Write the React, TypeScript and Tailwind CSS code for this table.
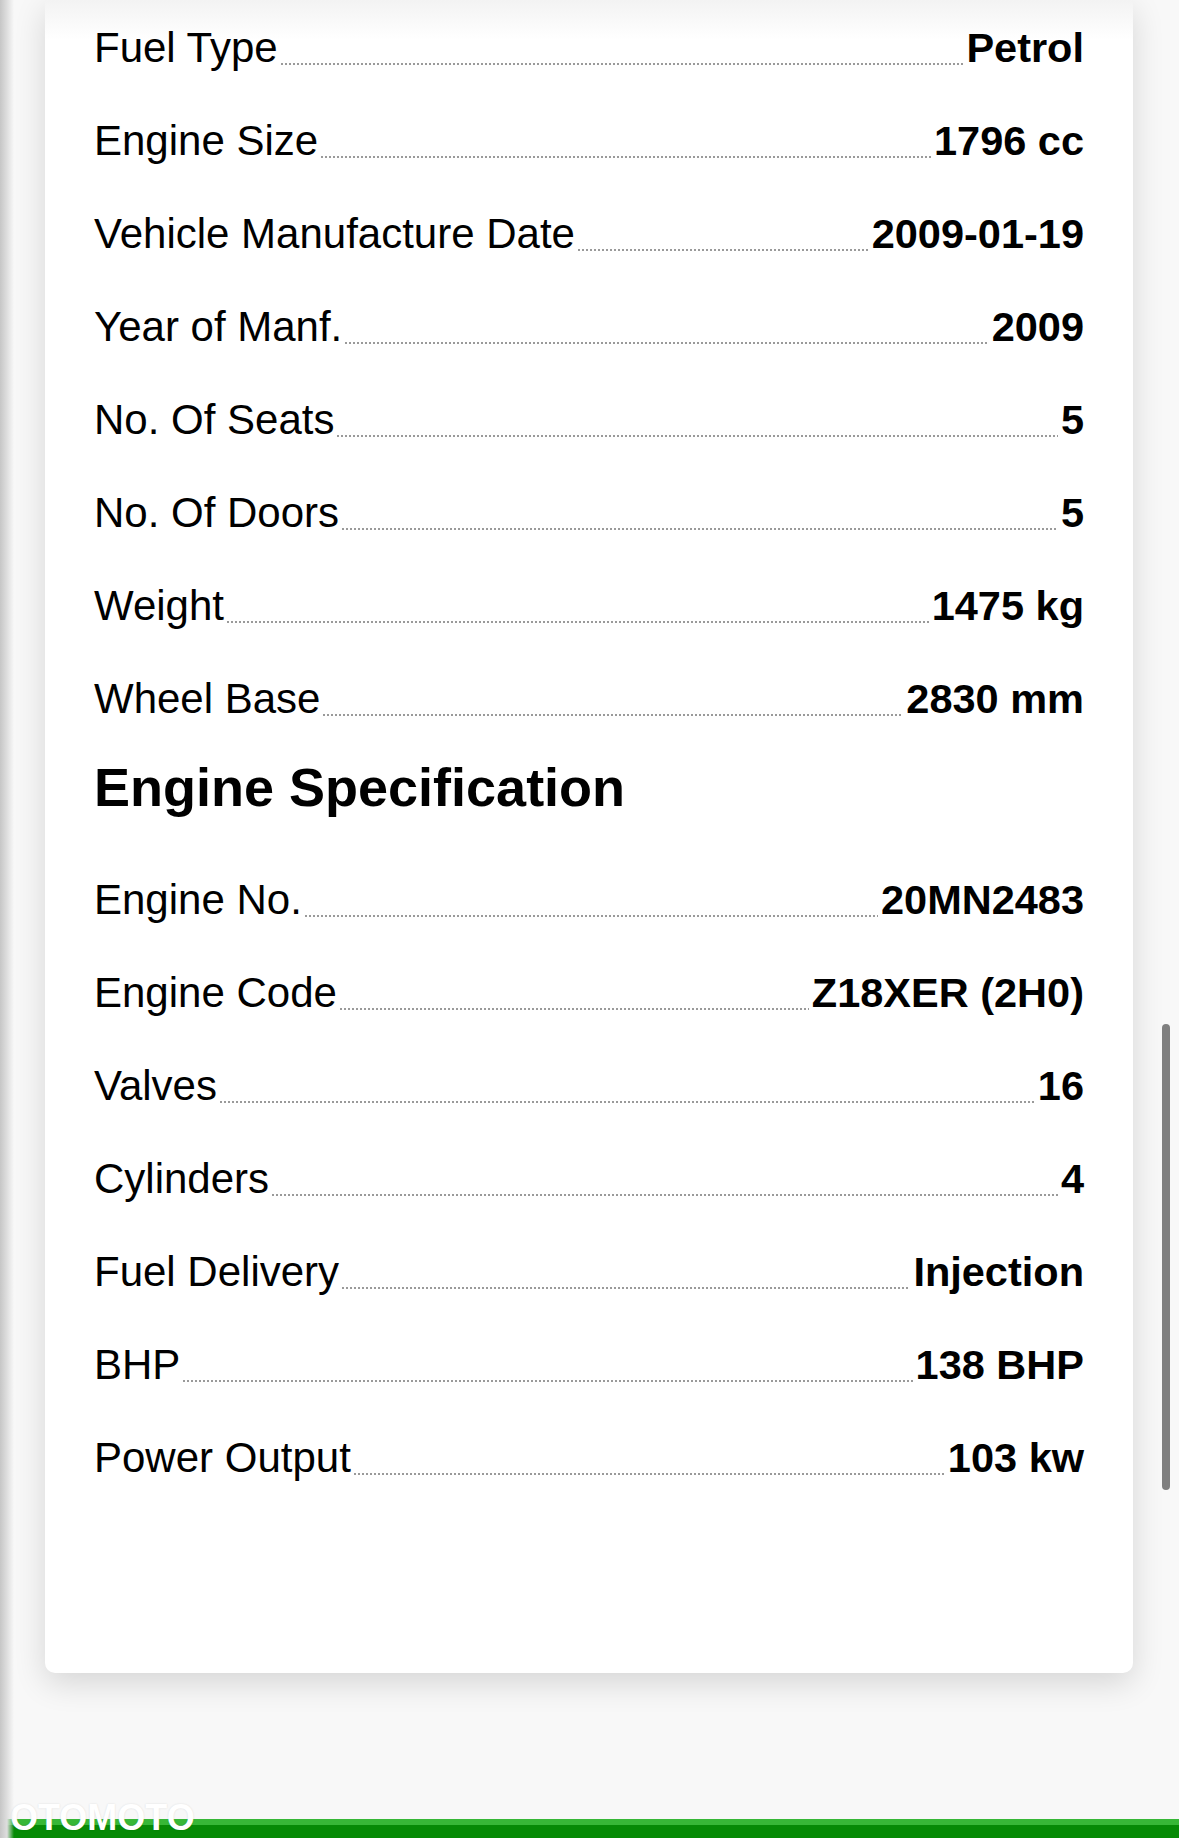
import React from "react";

const general: [string, string][] = [
  ["Fuel Type", "Petrol"],
  ["Engine Size", "1796 cc"],
  ["Vehicle Manufacture Date", "2009-01-19"],
  ["Year of Manf.", "2009"],
  ["No. Of Seats", "5"],
  ["No. Of Doors", "5"],
  ["Weight", "1475 kg"],
  ["Wheel Base", "2830 mm"],
];

const engine: [string, string][] = [
  ["Engine No.", "20MN2483"],
  ["Engine Code", "Z18XER (2H0)"],
  ["Valves", "16"],
  ["Cylinders", "4"],
  ["Fuel Delivery", "Injection"],
  ["BHP", "138 BHP"],
  ["Power Output", "103 kw"],
];

function Row({ label, value }: { label: string; value: string }) {
  return (
    <div className="flex items-baseline h-[93px] leading-[93px] text-black">
      <span className="whitespace-nowrap text-[42px]">{label}</span>
      <div className="flex-1 min-w-0 mx-[3px] h-[2px] bg-[linear-gradient(to_right,#9a9a9a_50%,transparent_50%)] bg-[length:4px_2px] bg-repeat-x translate-y-[3px]" />
      <span className="whitespace-nowrap font-bold text-[41.5px]">{value}</span>
    </div>
  );
}

export default function App() {
  return (
    <div className="relative w-[1179px] h-[1838px] bg-[#f8f8f8] overflow-hidden flex flex-col font-['Liberation_Sans',Arial,Helvetica,sans-serif]">
      <div className="pl-[45px] pr-[46px]">
        <div className="relative bg-white rounded-b-[10px] shadow-[0_10px_32px_rgba(0,0,0,0.14)] px-[49px] pt-[1px] pb-[169px]">
          <div className="absolute inset-x-0 top-0 h-[40px] bg-gradient-to-b from-[#f3f3f3] to-white" />
          <div className="relative">
            {general.map(([l, v]) => (
              <Row key={l} label={l} value={v} />
            ))}
            <h2 className="text-[54px] leading-[85px] font-bold text-black mb-[23px]">Engine Specification</h2>
            {engine.map(([l, v]) => (
              <Row key={l} label={l} value={v} />
            ))}
          </div>
        </div>
      </div>
      <div className="flex-1" />
      <div className="relative h-[19px]">
        <div className="h-[6px] bg-[#37b737]" />
        <div className="h-[13px] bg-[#068a06]" />
        <div className="absolute left-[10px] bottom-[7px] text-white font-black text-[36px] leading-[27px] [text-shadow:0_0_2px_rgba(0,0,0,0.12)]">
          OTOMOTO
        </div>
      </div>
      <div className="absolute left-0 top-0 bottom-0 w-[14px] bg-gradient-to-r from-[#c6c6c6] via-[#dedede] to-transparent" />
      <div className="absolute left-[1162px] top-[1024px] w-[8px] h-[466px] rounded-full bg-[#7f7f7f]" />
    </div>
  );
}
